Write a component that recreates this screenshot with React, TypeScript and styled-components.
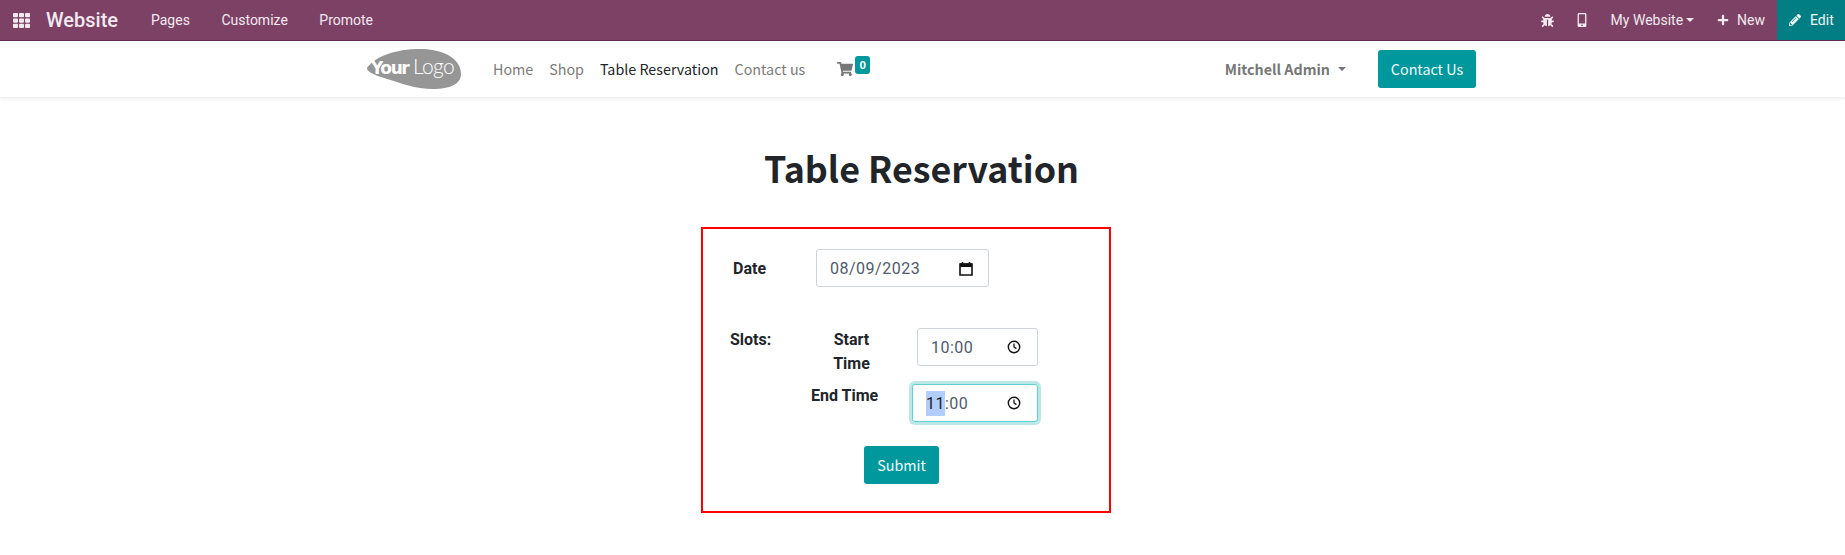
import styled, { createGlobalStyle } from "styled-components";
import { FaTh, FaBug, FaMobileAlt, FaPlus, FaPencilAlt, FaShoppingCart } from "react-icons/fa";

const SOURCE = `"Noto Sans CJK SC", "Noto Sans", sans-serif`;

const GlobalStyle = createGlobalStyle`
  html, body {
    margin: 0;
    padding: 0;
    background: #fff;
    font-family: Roboto, sans-serif;
  }
  * {
    box-sizing: border-box;
  }
`;

function CalendarIcon() {
  return (
    <svg width="14" height="15" viewBox="0 0 14 15">
      <path d="M1 3h12v11H1z" fill="none" stroke="#111" strokeWidth="1.6" />
      <path d="M1 2.5h12V6H1z" fill="#111" />
      <path d="M3.5 1v2M10.5 1v2" stroke="#111" strokeWidth="1.6" />
    </svg>
  );
}

function ClockIcon() {
  return (
    <ClockSvg width="14" height="14" viewBox="0 0 14 14">
      <circle cx="7" cy="7" r="5.7" fill="none" stroke="#111" strokeWidth="1.4" />
      <path d="M7 3.6V7l2.4 1.6" fill="none" stroke="#111" strokeWidth="1.3" />
    </ClockSvg>
  );
}

function Logo() {
  return (
    <svg width="96" height="40" viewBox="0 0 96 40">
      <path
        d="M1 19C7 10 24 1 50 0c26-1 45 9 45 25 0 10-11 15-28 15-18 0-32-6-46-10C11 27 0 23 1 19z"
        fill="#969696"
      />
      <text x="5" y="25" fontFamily="'DejaVu Sans', sans-serif" fontWeight="700" fontSize="17" fill="#fff" letterSpacing="-1.4">
        Your
      </text>
      <text x="47" y="25" fontFamily="Lato, sans-serif" fontWeight="300" fontSize="21" fill="#fff" letterSpacing="-0.6">
        Logo
      </text>
    </svg>
  );
}

export default function App() {
  return (
    <>
      <GlobalStyle />
      <TopBar>
        <AppsButton>
          <FaTh size={17} />
        </AppsButton>
        <Brand>Website</Brand>
        <TopMenu>
          <TopItem>Pages</TopItem>
          <TopItem>Customize</TopItem>
          <TopItem>Promote</TopItem>
        </TopMenu>
        <TopRight>
          <TopIcon $gap={21}>
            <FaBug size={13} />
          </TopIcon>
          <TopIcon $gap={22}>
            <FaMobileAlt size={14} />
          </TopIcon>
          <TopItem>My Website</TopItem>
          <TopCaret />
          <NewItem>
            <FaPlus size={12} />
            New
          </NewItem>
          <EditButton>
            <FaPencilAlt size={12} />
            Edit
          </EditButton>
        </TopRight>
      </TopBar>

      <SiteHeader>
        <LogoLink>
          <Logo />
        </LogoLink>
        <NavList>
          <NavLink>Home</NavLink>
          <NavLink>Shop</NavLink>
          <NavLink $active>Table Reservation</NavLink>
          <NavLink>Contact us</NavLink>
        </NavList>
        <Cart>
          <FaShoppingCart size={16} />
          <CartBadge>0</CartBadge>
        </Cart>
        <UserMenu>
          Mitchell Admin
          <UserCaret />
        </UserMenu>
        <PrimaryButton $w={98}>Contact Us</PrimaryButton>
      </SiteHeader>

      <Main>
        <Title>Table Reservation</Title>
        <FormBox>
          <DateRow>
            <DateLabel>Date</DateLabel>
            <FieldBox $w={173}>
              <FieldText>08/09/2023</FieldText>
              <CalendarIcon />
            </FieldBox>
          </DateRow>
          <SlotsRow>
            <SlotsLabel>Slots:</SlotsLabel>
            <SlotsGrid>
              <StartLabel>
                Start
                <br />
                Time
              </StartLabel>
              <FieldBox $w={121}>
                <TimeText>10:00</TimeText>
                <ClockIcon />
              </FieldBox>
              <EndLabel>End Time</EndLabel>
              <FocusedField $w={126}>
                <TimeText>
                  <Selected>11</Selected>:00
                </TimeText>
                <ClockIcon />
              </FocusedField>
            </SlotsGrid>
          </SlotsRow>
          <SubmitRow>
            <PrimaryButton $w={75}>Submit</PrimaryButton>
          </SubmitRow>
        </FormBox>
      </Main>
    </>
  );
}

const ClockSvg = styled.svg`
  margin-right: 1px;
`;

const TopBar = styled.div`
  height: 41px;
  display: flex;
  align-items: stretch;
  background: #7c4165;
  border-bottom: 1px solid #5f2f4d;
  color: #f3e9f0;
  font-size: 14px;
`;

const AppsButton = styled.div`
  width: 46px;
  padding-left: 13px;
  display: flex;
  align-items: center;
`;

const Brand = styled.div`
  width: 105px;
  display: flex;
  align-items: center;
  font-size: 20px;
  font-weight: 500;
`;

const TopMenu = styled.div`
  display: flex;
  align-items: center;
  gap: 31.5px;
`;

const TopItem = styled.div`
  display: flex;
  align-items: center;
`;

const TopRight = styled.div`
  margin-left: auto;
  display: flex;
  align-items: center;
`;

const TopIcon = styled.div<{ $gap: number }>`
  display: flex;
  margin-right: ${(p) => p.$gap}px;
`;

const TopCaret = styled.span`
  width: 0;
  height: 0;
  margin: 0 23px 0 3px;
  border-top: 4px solid #f3e9f0;
  border-left: 4px solid transparent;
  border-right: 4px solid transparent;
`;

const NewItem = styled.div`
  display: flex;
  align-items: center;
  gap: 8px;
  margin-right: 12px;
`;

const EditButton = styled.div`
  width: 68px;
  height: 40px;
  padding-left: 12px;
  display: flex;
  align-items: center;
  gap: 9px;
  background: #017e84;
  color: #eef7f7;
`;

const SiteHeader = styled.header`
  height: 56px;
  padding: 0 369px 0 366px;
  display: flex;
  align-items: center;
  background: #fff;
  box-shadow: 0 2px 3px rgba(0, 0, 0, 0.07);
  font-family: ${SOURCE};
  font-size: 14.3px;
`;

const LogoLink = styled.div`
  display: flex;
  margin-right: 31px;
`;

const NavList = styled.nav`
  display: flex;
  gap: 16px;
  padding-bottom: 2px;
`;

const NavLink = styled.a<{ $active?: boolean }>`
  color: ${(p) => (p.$active ? "#212529" : "#7b7b7b")};
`;

const Cart = styled.div`
  position: relative;
  margin-left: 32px;
  display: flex;
  color: #777;
`;

const CartBadge = styled.span`
  position: absolute;
  top: -5px;
  left: 18px;
  width: 15px;
  height: 18px;
  border-radius: 3px;
  background: #00989d;
  color: #fff;
  font-size: 11px;
  font-weight: 700;
  line-height: 17px;
  text-align: center;
`;

const UserMenu = styled.div`
  margin-left: auto;
  display: flex;
  align-items: center;
  color: #777;
  font-weight: 700;
  padding-bottom: 1px;
`;

const UserCaret = styled.span`
  width: 0;
  height: 0;
  margin: 0 32px 0 8px;
  border-top: 4px solid #777;
  border-left: 4px solid transparent;
  border-right: 4px solid transparent;
`;

const PrimaryButton = styled.button<{ $w: number }>`
  width: ${(p) => p.$w}px;
  height: 38px;
  padding: 0 0 2px;
  border: 0;
  border-radius: 3px;
  background: #00989d;
  color: #f2fbfb;
  font-family: ${SOURCE};
  font-size: 14.3px;
`;

const Main = styled.main`
  display: block;
`;

const Title = styled.h1`
  margin: 0;
  padding: 45px 2px 0 0;
  height: 130px;
  text-align: center;
  font-family: ${SOURCE};
  font-size: 35.8px;
  font-weight: 700;
  line-height: 50px;
  color: #212529;
`;

const FormBox = styled.form`
  width: 410px;
  height: 286px;
  margin-left: 701px;
  padding: 20px 0 0;
  border: 2px solid #ff0000;
  font-size: 16px;
  font-weight: 700;
  color: #212529;
`;

const DateRow = styled.div`
  display: flex;
  align-items: center;
  padding-left: 30px;
`;

const DateLabel = styled.div`
  width: 83px;
`;

const FieldBox = styled.div<{ $w: number }>`
  width: ${(p) => p.$w}px;
  height: 38px;
  padding: 0 15px 0 13px;
  display: flex;
  align-items: center;
  justify-content: space-between;
  background: #fff;
  border: 1px solid #ced4da;
  border-radius: 3px;
  font-weight: 400;
  color: #4f5a6b;
`;

const FocusedField = styled(FieldBox)`
  border-color: #5fd0d3;
  box-shadow: 0 0 0 3px #bde6e7;
`;

const FieldText = styled.span`
  letter-spacing: 0.5px;
`;

const TimeText = styled.span`
  letter-spacing: 0.5px;
`;

const Selected = styled.span`
  background: #b0cdfb;
  color: #212529;
  padding: 3px 0;
`;

const SlotsRow = styled.div`
  display: flex;
  padding: 41px 0 0 27px;
`;

const SlotsLabel = styled.div`
  width: 81px;
  line-height: 24px;
`;

const SlotsGrid = styled.div`
  display: grid;
  grid-template-columns: 101px 126px;
  row-gap: 8px;
  justify-items: end;
`;

const StartLabel = styled.div`
  justify-self: center;
  padding-right: 20px;
  text-align: center;
  line-height: 24px;
`;

const EndLabel = styled.div`
  justify-self: start;
  line-height: 24px;
`;

const SubmitRow = styled.div`
  display: flex;
  padding: 24px 0 0 161px;
`;
